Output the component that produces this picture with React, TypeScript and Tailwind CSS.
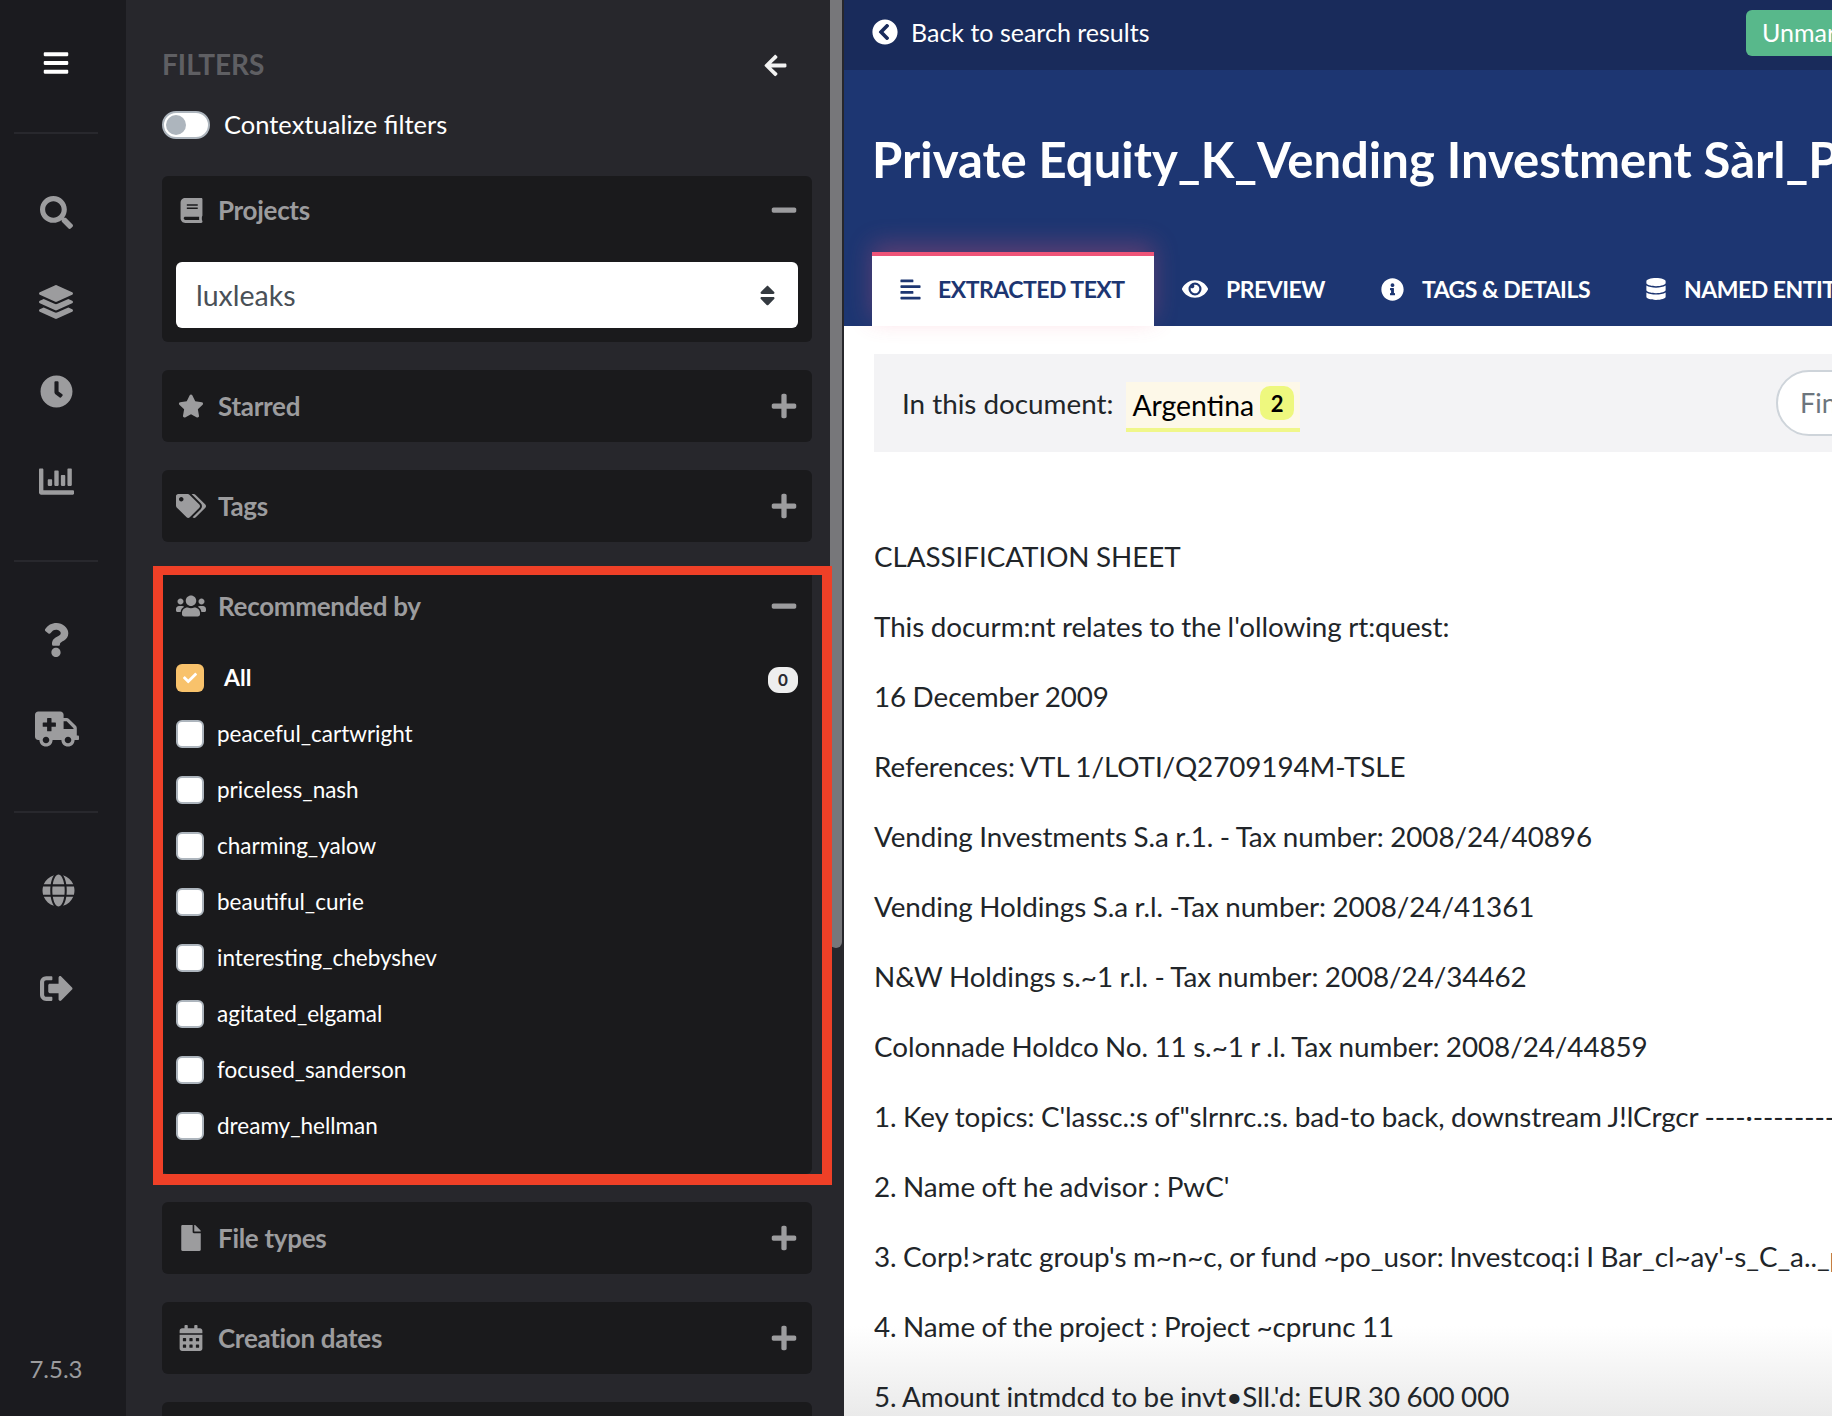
import React from "react";
import {
  FaBars, FaSearch, FaLayerGroup, FaClock, FaChartBar, FaQuestion, FaAmbulance, FaGlobe, FaSignOutAlt,
  FaArrowLeft, FaBook, FaStar, FaTags, FaUsers, FaCheck, FaFile, FaCalendarAlt, FaChevronCircleLeft,
  FaAlignLeft, FaEye, FaInfoCircle, FaDatabase, FaSort, FaPlus, FaMinus,
} from "react-icons/fa";

function NavIcon({ children, h = "h-[89.5px]" }: { children: React.ReactNode; h?: string }) {
  return <div className={`flex items-center justify-center pr-[14px] text-[#9c9c9e] ${h}`}>{children}</div>;
}

function Divider() {
  return <div className="ml-[14px] mr-[28px] h-[2px] bg-[#28282d]" />;
}

function SectionHeader({ icon, label, open, h = "h-[72px]" }: { icon: React.ReactNode; label: string; open?: boolean; h?: string }) {
  return (
    <div className={`flex items-center pl-[14px] pr-[14px] text-[#9c9c9e] ${h}`}>
      <div className="flex w-[30px] items-center justify-center">{icon}</div>
      <span className="ml-[12px] flex-1 text-[26px] font-bold tracking-[-0.3px]">{label}</span>
      {open ? <FaMinus size={28} /> : <FaPlus size={28} />}
    </div>
  );
}

function Check({ label, checked, count }: { label: string; checked?: boolean; count?: number }) {
  return (
    <div className="flex h-[56px] items-center text-white">
      <div
        className={
          checked
            ? "flex h-[28px] w-[28px] items-center justify-center rounded-[6px] bg-[#f8c26b] text-white"
            : "h-[28px] w-[28px] rounded-[6px] border-2 border-[#adb5bd] bg-white"
        }
      >
        {checked && <FaCheck size={14} />}
      </div>
      <span
        className={
          checked
            ? "mb-[1px] ml-[20px] flex-1 text-[23px] font-bold"
            : "mb-[1px] ml-[13px] flex-1 text-[22.5px]"
        }
      >
        {label}
      </span>
      {count !== undefined && (
        <span className="mt-[4px] flex h-[26px] w-[30px] items-center justify-center rounded-[11px] bg-[#eeeeee] text-[17px] font-bold text-[#2a2a30]">
          {count}
        </span>
      )}
    </div>
  );
}

const people = [
  "peaceful_cartwright",
  "priceless_nash",
  "charming_yalow",
  "beautiful_curie",
  "interesting_chebyshev",
  "agitated_elgamal",
  "focused_sanderson",
  "dreamy_hellman",
];

const lines = [
  "CLASSIFICATION SHEET",
  "This docurm:nt relates to the l'ollowing rt:quest:",
  "16 December 2009",
  "References: VTL 1/LOTI/Q2709194M-TSLE",
  "Vending Investments S.a r.1. - Tax number: 2008/24/40896",
  "Vending Holdings S.a r.l. -Tax number: 2008/24/41361",
  "N&W Holdings s.~1 r.l. - Tax number: 2008/24/34462",
  "Colonnade Holdco No. 11 s.~1 r .l. Tax number: 2008/24/44859",
  "1. Key topics: C'lassc.:s of\"slrnrc.:s. bad-to back, downstream J!lCrgcr ----·--------",
  "2. Name oft he advisor : PwC'",
  "3. Corp!>ratc group's m~n~c, or fund ~po_usor: lnvestcoq:i I Bar_cl~ay'-s_C_a.._p",
  "4. Name of the project : Project ~cprunc 11",
  "5. Amount intmdcd to be invt•Sll.'d: EUR 30 600 000",
];

export default function App() {
  return (
    <div className="relative flex h-[1416px] w-[1832px] overflow-hidden bg-white font-['Lato',sans-serif] text-[#212529]">
      {/* Icon rail */}
      <aside className="flex h-full w-[126px] shrink-0 flex-col bg-[#1b1b1f]">
        <div className="flex h-[132px] items-center justify-center pb-[6px] pr-[14px] text-white">
          <FaBars size={28} />
        </div>
        <Divider />
        <div className="pt-[34px] pb-[34px]">
          <NavIcon><FaSearch size={33} /></NavIcon>
          <NavIcon><FaLayerGroup size={34} /></NavIcon>
          <NavIcon><FaClock size={33} /></NavIcon>
          <NavIcon><FaChartBar size={35} /></NavIcon>
        </div>
        <Divider />
        <div className="pt-[33px] pb-[38px]">
          <NavIcon h="h-[89px]"><FaQuestion size={34} /></NavIcon>
          <NavIcon h="h-[89px]"><FaAmbulance size={44} className="ml-[2px]" /></NavIcon>
        </div>
        <Divider />
        <div className="pt-[29px]">
          <NavIcon h="h-[97px]"><FaGlobe size={33} className="ml-[4px]" /></NavIcon>
          <NavIcon h="h-[97px]"><FaSignOutAlt size={33} className="mt-[2px]" /></NavIcon>
        </div>
        <div className="mt-auto pb-[29px] pr-[14px] text-center text-[24px] text-[#9c9c9e]">7.5.3</div>
      </aside>

      {/* Filters */}
      <section className="relative h-full w-[718px] shrink-0 overflow-hidden bg-[#27272c] pl-[36px]">
        <div className="mt-[44px] flex h-[40px] w-[650px] items-center justify-between pr-[24px]">
          <span className="text-[28px] font-bold text-[#5f5f63]">FILTERS</span>
          <FaArrowLeft size={25} className="mt-[2px] text-[#f2f2f2]" />
        </div>
        <div className="mt-[26px] flex h-[30px] items-center">
          <div className="flex h-[28px] w-[48px] items-center rounded-full border-2 border-[#adb5bd] bg-white pl-[2px]">
            <div className="h-[20px] w-[20px] rounded-full bg-[#adb5bd]" />
          </div>
          <span className="mb-[1px] ml-[14px] text-[25.5px] text-white">Contextualize filters</span>
        </div>

        <div className="mt-[36px] flex w-[650px] flex-col gap-[28px]">
          <div className="rounded-[6px] bg-[#1a1a1c] pb-[14px]">
            <SectionHeader icon={<FaBook size={25} />} label="Projects" open h="h-[68px]" />
            <div className="mx-[14px] mt-[18px] flex h-[66px] items-center justify-between rounded-[6px] bg-white pl-[20px] pr-[18px] text-[28.5px] text-[#495057]">
              <span>luxleaks</span>
              <FaSort size={25} className="text-[#343a40]" />
            </div>
          </div>
          <div className="rounded-[6px] bg-[#1a1a1c]">
            <SectionHeader icon={<FaStar size={26} />} label="Starred" />
          </div>
          <div className="rounded-[6px] bg-[#1a1a1c]">
            <SectionHeader icon={<FaTags size={30} />} label="Tags" />
          </div>
          <div className="rounded-[6px] bg-[#1a1a1c] pb-[20px]">
            <SectionHeader icon={<FaUsers size={30} />} label="Recommended by" open />
            <div className="px-[14px] pt-[8px]">
              <Check label="All" checked count={0} />
              {people.map((p) => (
                <Check key={p} label={p} />
              ))}
            </div>
          </div>
          <div className="rounded-[6px] bg-[#1a1a1c]">
            <SectionHeader icon={<FaFile size={26} />} label="File types" />
          </div>
          <div className="rounded-[6px] bg-[#1a1a1c]">
            <SectionHeader icon={<FaCalendarAlt size={26} />} label="Creation dates" />
          </div>
          <div className="h-[72px] rounded-[6px] bg-[#1a1a1c]" />
        </div>
        {/* scrollbar thumb */}
        <div className="absolute right-[2px] top-0 h-[948px] w-[12px] rounded-b-[6px] bg-[#77777a]" />
      </section>

      {/* Document */}
      <main className="relative h-full min-w-0 flex-1 overflow-hidden">
        <div className="pointer-events-none absolute inset-x-0 bottom-0 h-[90px] bg-gradient-to-b from-transparent to-[#eaeaea]" />
        <div className="relative flex h-[70px] items-center justify-between whitespace-nowrap bg-[#192b5b] pl-[28px] text-white">
          <div className="flex items-center text-[25px]">
            <FaChevronCircleLeft size={26} className="mb-[6px]" />
            <span className="mb-[4px] ml-[13px]">Back to search results</span>
          </div>
          <div className="mb-[4px] flex h-[46px] w-[86px] items-center overflow-hidden rounded-l-[6px] bg-[#58b88b] pl-[16px] text-[25px]">
            Unmark
          </div>
        </div>
        <div className="relative flex h-[256px] flex-col justify-between whitespace-nowrap bg-[#1d3672] pl-[28px]">
          <h1 className="mt-[58px] text-[49px] font-bold leading-[62px] text-white">
            Private Equity_K_Vending Investment Sàrl_P
          </h1>
          <div className="flex h-[74px] items-center text-[23px] font-bold tracking-[-0.5px] text-white">
            <div className="flex h-full w-[282px] shrink-0 items-center border-t-4 border-[#ef5478] bg-white pb-[4px] pl-[27px] text-[#1d3672] shadow-[0_-8px_24px_rgba(239,84,120,0.3)]">
              <FaAlignLeft size={23} />
              <span className="ml-[16px]">EXTRACTED TEXT</span>
            </div>
            <div className="ml-[28px] flex shrink-0 items-center">
              <FaEye size={26} />
              <span className="ml-[18px]">PREVIEW</span>
            </div>
            <div className="ml-[56px] flex shrink-0 items-center">
              <FaInfoCircle size={23} />
              <span className="ml-[18px]">TAGS &amp; DETAILS</span>
            </div>
            <div className="ml-[55px] flex shrink-0 items-center">
              <FaDatabase size={22} />
              <span className="ml-[17px]">NAMED ENTITIES</span>
            </div>
          </div>
        </div>

        <div className="relative ml-[30px] mt-[28px] flex h-[98px] w-[1226px] items-center justify-between bg-[#f3f3f5] pl-[28px] pr-[24px]">
          <div className="flex items-center text-[27.8px]">
            <span className="mt-[2px]">In this document:</span>
            <span className="ml-[13px] mt-[8px] flex h-[50px] items-center border-b-4 border-[#f0f78a] bg-[#fdf8e8] pl-[6px] pr-[6px] text-[28.4px] text-black">
              Argentina
              <span className="mb-[4px] ml-[6px] flex h-[34px] w-[34px] items-center justify-center rounded-[10px] bg-[#eef87e] text-[22px] font-bold">
                2
              </span>
            </span>
          </div>
          <div className="flex h-[66px] w-[300px] items-center rounded-full border-2 border-[#ced4da] bg-white pl-[22px] text-[27px] text-[#6c757d]">
            Find
          </div>
        </div>

        <div className="relative mt-[70px] whitespace-nowrap pl-[30px] text-[27.8px] tracking-[-0.05px] [word-spacing:-0.6px]">
          {lines.map((l) => (
            <p key={l} className="h-[70px] leading-[70px]">{l}</p>
          ))}
        </div>
      </main>

      {/* Annotation */}
      <div className="pointer-events-none absolute left-[153px] top-[566px] h-[619px] w-[679px] border-x-[10px] border-b-[11px] border-t-[9px] border-[#ef4027]" />
    </div>
  );
}
